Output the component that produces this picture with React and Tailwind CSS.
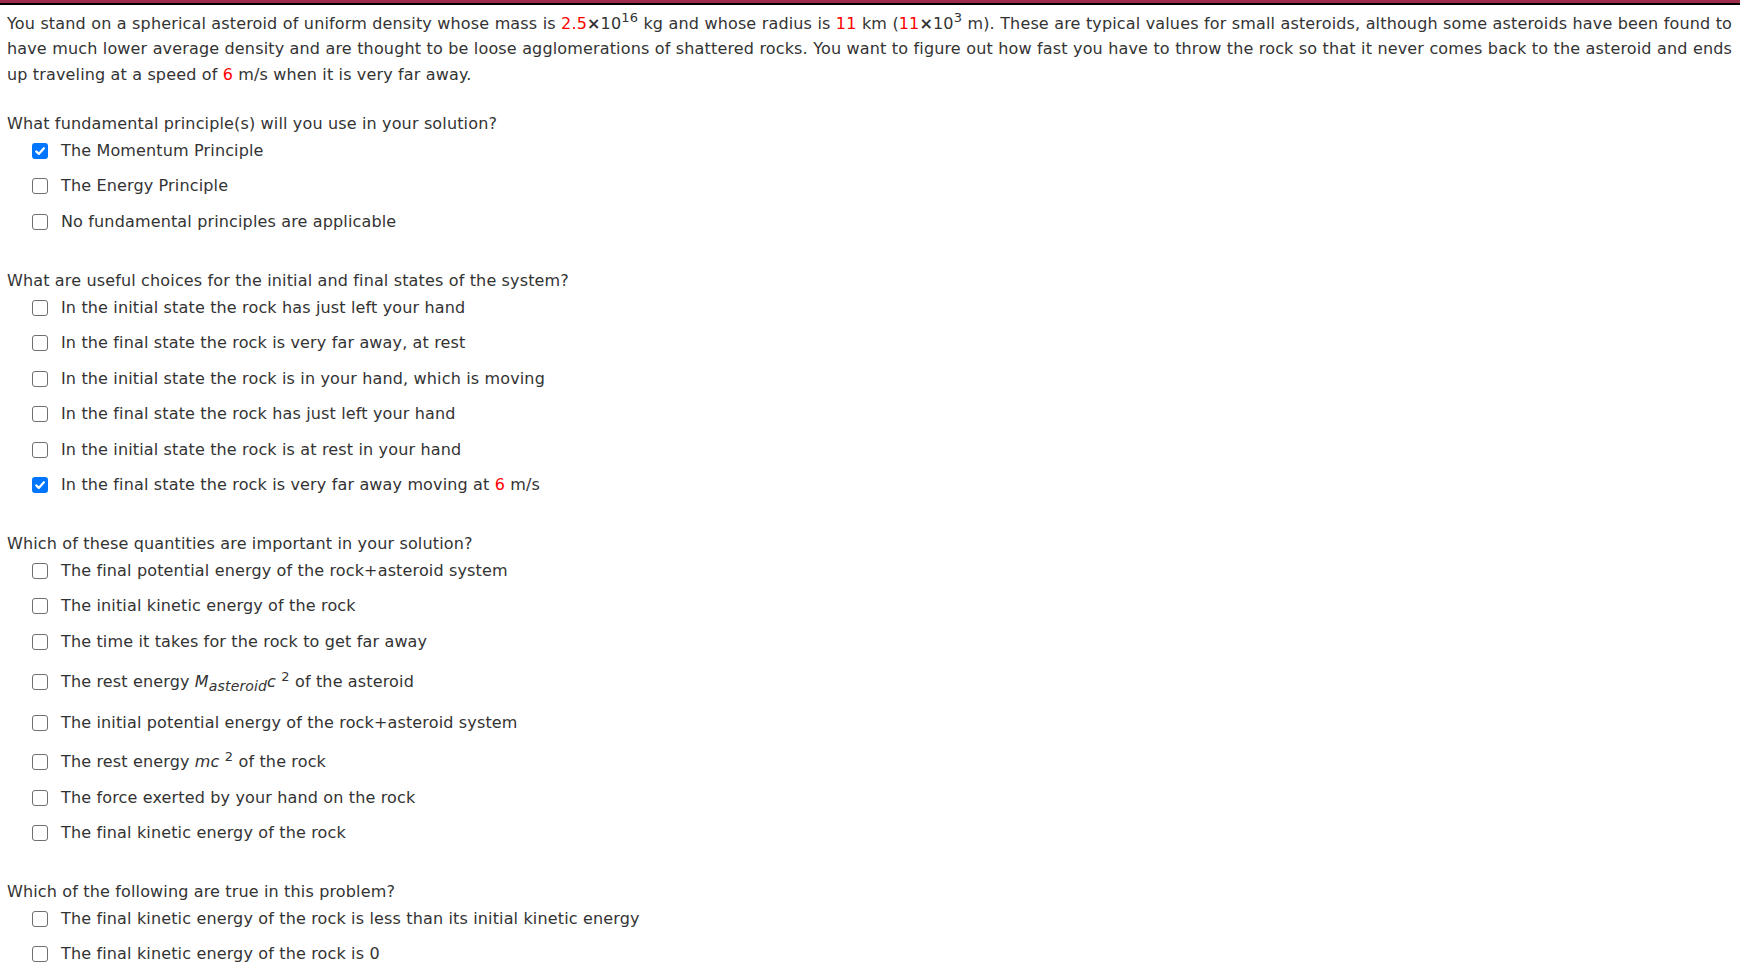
import React from 'react';

const red = 'text-[#ff0000]';

function Box({ checked }) {
  if (checked) {
    return (
      <span className="flex h-[16px] w-[16px] shrink-0 items-center justify-center rounded-[3px] bg-[#0075ff]">
        <svg width="12" height="12" viewBox="0 0 12 12">
          <path d="M2.2 6.4 L4.8 8.9 L9.9 3.2" fill="none" stroke="#fff" strokeWidth="2.2" strokeLinecap="round" strokeLinejoin="round" />
        </svg>
      </span>
    );
  }
  return <span className="h-[16px] w-[16px] shrink-0 rounded-[3px] border border-[#6f6f6f] bg-white" />;
}

// one checkbox row; extra top/bottom room for rows with super/subscripts
function Option({ checked, children, pad = '' }) {
  return (
    <div className={`flex h-[35.5px] items-center box-content ${pad}`}>
      <div className="ml-[32px] flex items-center gap-[13px]">
        <Box checked={checked} />
        <span className="whitespace-nowrap leading-[20px]">{children}</span>
      </div>
    </div>
  );
}

function Question({ title, className = '', children }) {
  return (
    <div className={className}>
      <div className="h-[18px] whitespace-nowrap pl-[7px] leading-[18px]">{title}</div>
      <div>{children}</div>
    </div>
  );
}

const Sup = ({ children }) => <sup className="text-[13px] top-[-0.5em]">{children}</sup>;

export default function App() {
  return (
    <div
      className="min-h-[972px] bg-white text-[16px] tracking-[0.15px] text-[#333333]"
      style={{ fontFamily: '"DejaVu Sans", Verdana, sans-serif' }}
    >
      <div className="h-[3px] bg-[#9e2d4c]" />
      <div className="h-[2px] bg-black" />

      <p className="mt-[5.5px] pl-[7px] pr-[8px] text-justify leading-[25.5px]">
        You stand on a spherical asteroid of uniform density whose mass is <span className={red}>2.5</span>
        <b>×</b>10<Sup>16</Sup> kg and whose radius is <span className={red}>11</span> km (
        <span className={red}>11</span>
        <b>×</b>10<Sup>3</Sup> m). These are typical values for small asteroids, although some asteroids have been
        found to have much lower average density and are thought to be loose agglomerations of shattered rocks. You
        want to figure out how fast you have to throw the rock so that it never comes back to the asteroid and ends up
        traveling at a speed of <span className={red}>6</span> m/s when it is very far away.
      </p>

      <Question title="What fundamental principle(s) will you use in your solution?" className="mt-[28px]">
        <Option checked>The Momentum Principle</Option>
        <Option>The Energy Principle</Option>
        <Option>No fundamental principles are applicable</Option>
      </Question>

      <Question title="What are useful choices for the initial and final states of the system?" className="mt-[32.5px]">
        <Option>In the initial state the rock has just left your hand</Option>
        <Option>In the final state the rock is very far away, at rest</Option>
        <Option>In the initial state the rock is in your hand, which is moving</Option>
        <Option>In the final state the rock has just left your hand</Option>
        <Option>In the initial state the rock is at rest in your hand</Option>
        <Option checked>
          In the final state the rock is very far away moving at <span className={red}>6</span> m/s
        </Option>
      </Question>

      <Question title="Which of these quantities are important in your solution?" className="mt-[32px]">
        <Option>The final potential energy of the rock+asteroid system</Option>
        <Option>The initial kinetic energy of the rock</Option>
        <Option>The time it takes for the rock to get far away</Option>
        <Option pad="pt-[5px] pb-[5px]">
          The rest energy <i>M</i>
          <sub className="text-[14px] italic">asteroid</sub>
          <i>c</i> <Sup>2</Sup> of the asteroid
        </Option>
        <Option>The initial potential energy of the rock+asteroid system</Option>
        <Option pad="pt-[4px]">
          The rest energy <i>mc</i> <Sup>2</Sup> of the rock
        </Option>
        <Option>The force exerted by your hand on the rock</Option>
        <Option>The final kinetic energy of the rock</Option>
      </Question>

      <Question title="Which of the following are true in this problem?" className="mt-[32px]">
        <Option>The final kinetic energy of the rock is less than its initial kinetic energy</Option>
        <Option>The final kinetic energy of the rock is 0</Option>
      </Question>
    </div>
  );
}
